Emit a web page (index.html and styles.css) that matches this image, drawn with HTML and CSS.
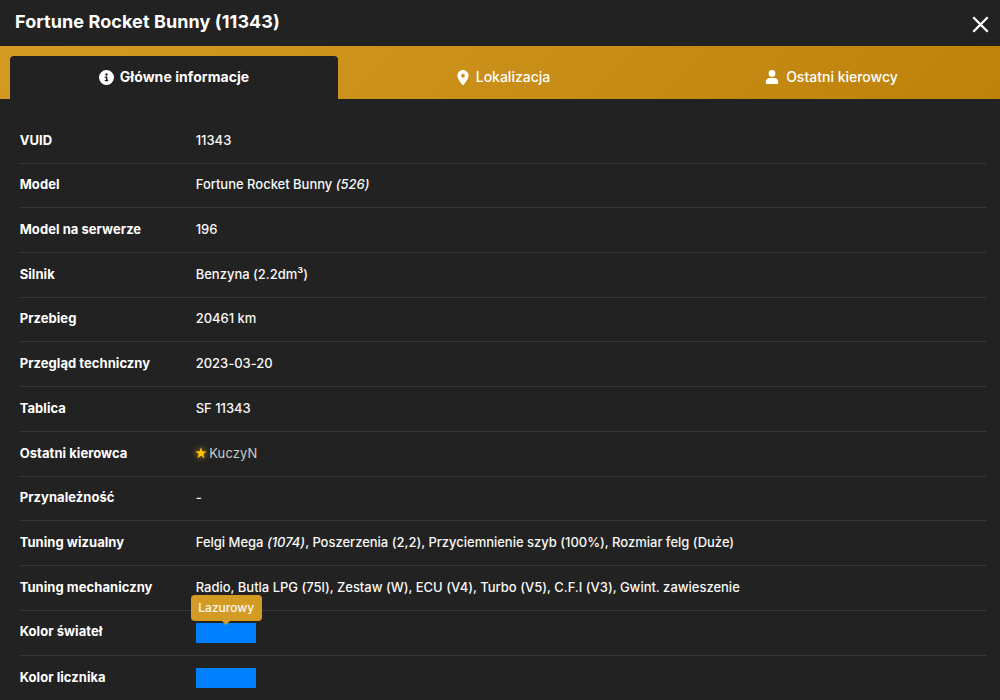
FILE: index.html
```html
<!DOCTYPE html>
<html lang="pl">
<head>
<meta charset="utf-8">
<title>Fortune Rocket Bunny</title>
<link rel="stylesheet" href="styles.css">
</head>
<body>
<div class="modal">
  <header class="header">
    <h1 class="title">Fortune Rocket Bunny (11343)</h1>
    <svg class="close" viewBox="0 0 16 16"><path d="M1.2 1.2 14.8 14.8M14.8 1.2 1.2 14.8"/></svg>
  </header>
  <nav class="tabs">
    <div class="tab active"><svg class="icon" viewBox="0 0 512 512"><path d="M256 512A256 256 0 1 0 256 0a256 256 0 1 0 0 512zM216 336h24V272H216c-13.300 0-24-10.700-24-24s10.700-24 24-24h48c13.300 0 24 10.700 24 24v88h8c13.300 0 24 10.700 24 24s-10.700 24-24 24H216c-13.300 0-24-10.700-24-24s10.700-24 24-24zm40-224a40 40 0 1 1 0 80 40 40 0 1 1 0-80z"/></svg><span>Główne informacje</span></div>
    <div class="tab"><svg class="icon pin" viewBox="0 0 384 512"><path d="M215.700 499.200C267 435 384 279.400 384 192 384 86 298 0 192 0S0 86 0 192c0 87.400 117 243 168.300 307.200 12.300 15.300 35.100 15.300 47.400 0zM192 128a64 64 0 1 1 0 128 64 64 0 1 1 0-128z"/></svg><span>Lokalizacja</span></div>
    <div class="tab"><svg class="icon user" viewBox="0 0 448 512"><path d="M224 248A124 124 0 1 0 224 0a124 124 0 1 0 0 248zM136 288C61 288 0 349 0 424v40c0 26.500 21.500 48 48 48h352c26.500 0 48-21.500 48-48v-40c0-75-61-136-136-136z"/></svg><span>Ostatni kierowcy</span></div>
  </nav>
  <dl class="details">
    <div class="row"><dt>VUID</dt><dd>11343</dd></div>
    <div class="row"><dt>Model</dt><dd>Fortune Rocket Bunny <i>(526)</i></dd></div>
    <div class="row"><dt>Model na serwerze</dt><dd>196</dd></div>
    <div class="row"><dt>Silnik</dt><dd>Benzyna (2.2dm³)</dd></div>
    <div class="row"><dt>Przebieg</dt><dd>20461 km</dd></div>
    <div class="row"><dt>Przegląd techniczny</dt><dd>2023-03-20</dd></div>
    <div class="row"><dt>Tablica</dt><dd>SF 11343</dd></div>
    <div class="row"><dt>Ostatni kierowca</dt><dd class="driver"><svg class="star" viewBox="0 0 24 24"><path d="M12 .5 14.900 8.700 23.600 8.900 16.700 14.100 19.200 22.500 12 17.500 4.800 22.500 7.300 14.100.4 8.900 9.100 8.700z"/></svg><span>KuczyN</span></dd></div>
    <div class="row"><dt>Przynależność</dt><dd>-</dd></div>
    <div class="row"><dt>Tuning wizualny</dt><dd>Felgi Mega <i>(1074)</i>, Poszerzenia (2,2), Przyciemnienie szyb (100%), Rozmiar felg (Duże)</dd></div>
    <div class="row"><dt>Tuning mechaniczny</dt><dd>Radio, Butla LPG (75l), Zestaw (W), ECU (V4), Turbo (V5), C.F.I (V3), Gwint. zawieszenie</dd></div>
    <div class="row"><dt>Kolor świateł</dt><dd><div class="swatch"><span class="tooltip">Lazurowy</span></div></dd></div>
    <div class="row"><dt>Kolor licznika</dt><dd><div class="swatch"></div></dd></div>
  </dl>
</div>
</body>
</html>
```
FILE: styles.css
```css
* { box-sizing: border-box; }
body { margin: 0; background: #222; color: #fff; font: 500 13px/20px Inter, sans-serif; overflow: hidden; }
.modal { height: 700px; overflow: hidden; }
.header { height: 46px; display: flex; justify-content: space-between; padding: 9px 11px 0 15px; }
.title { margin: 0; font-size: 18px; line-height: 25px; font-weight: 700; letter-spacing: .09px; }
.close { width: 17px; height: 17px; margin-top: 7px; fill: none; stroke: #fff; stroke-width: 2.2; }
.tabs { height: 53px; padding: 10px 6px 0 10px; display: grid; grid-template-columns: repeat(3, 1fr); background: linear-gradient(135deg, #d49b24, #be820b); }
.tab { display: flex; align-items: center; justify-content: center; gap: 7px; padding: 0 0 1px 3px; font-size: 14px; }
.active { background: #222; border-radius: 4px 4px 0 0; padding-left: 0; font-weight: 700; gap: 6px; letter-spacing: .06px; }
.icon { width: 14px; height: 14px; fill: #fff; }
.active .icon { width: 15px; height: 15px; }
.pin { width: 12px; height: 15px; }
.details { margin: 0; padding: 19.900px 14px 0 20px; }
.row { height: 44.720px; display: flex; align-items: center; padding-bottom: 2.400px; border-bottom: 1px solid #383838; }
.row:last-child { border-bottom: 0; }
dt { width: 176px; font-weight: 700; letter-spacing: .05px; margin-left: -.3px; }
dd { margin: 0; letter-spacing: -.012px; color: #f8f8f8; }
.driver { display: flex; align-items: center; gap: 2px; color: #ccc; font-weight: 400; letter-spacing: .1px; }
.star { width: 12px; height: 12px; margin-left: -.5px; fill: #ffc107; filter: drop-shadow(0 0 3px rgba(255, 193, 7, .65)); }
.swatch { position: relative; width: 60px; height: 20.500px; margin-top: 3px; background: #007fff; }
.tooltip { position: absolute; left: -5px; top: -27.500px; width: 71px; height: 26px; font-size: 12px; line-height: 26px; text-align: center; border-radius: 4px; background: #d49b24; }
.tooltip::after { content: ""; position: absolute; left: 31px; top: 26px; border: 4px solid transparent; border-top-color: #d49b24; border-bottom: 0; }
```
